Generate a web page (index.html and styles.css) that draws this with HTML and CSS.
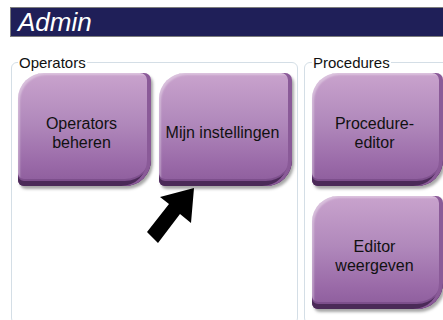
FILE: index.html
```html
<!DOCTYPE html>
<html>
<head>
  <meta charset="UTF-8">
  <title>Admin</title>
  <link rel="stylesheet" href="styles.css">
</head>
<body>
  <div class="page">
    <div class="header">Admin</div>

    <div class="panels">
      <fieldset class="group group-operators">
        <legend>Operators</legend>
        <div class="tiles">
          <button class="tile">Operators<br>beheren</button>
          <button class="tile">Mijn instellingen</button>
        </div>
      </fieldset>

      <fieldset class="group group-procedures">
        <legend>Procedures</legend>
        <div class="tiles tiles-column">
          <button class="tile">Procedure-<br>editor</button>
          <button class="tile">Editor<br>weergeven</button>
        </div>
      </fieldset>
    </div>

    <!-- pijl naar Mijn instellingen -->
    <svg class="pointer" width="60" height="64" viewBox="0 0 60 64">
      <polygon points="48,2 45,37 34,28 12,57 1,46 23,18 14,11" fill="#000"/>
    </svg>
  </div>
</body>
</html>
```

FILE: styles.css
```css
body {
  margin: 0;
  background-color: #fff;
  font-family: "Liberation Sans", Arial, sans-serif;
  overflow: hidden;
}
.page {
  position: relative;
  height: 320px;
  overflow: hidden;
}
.header {
  margin: 7px 0 0 10px;
  height: 28px;
  line-height: 28px;
  padding-left: 7px;
  background-color: #1f1f58;
  border: 1px solid #7c7c7c;
  border-right: none;
  color: #fff;
  font-size: 26px;
  font-style: italic;
}
.panels {
  display: flex;
  gap: 6px;
  margin: 17px 0 0 11px;
}
.group {
  margin: 0;
  min-width: 0;
  height: 270px;
  border: 1px solid #d4dee6;
  border-radius: 6px;
  padding: 2px 5px 0 6px;
  box-sizing: border-box;
}
.group legend {
  font-size: 15px;
  color: #111;
  padding: 0 1px;
  margin-left: 0;
}
.group-operators {
  width: 287px;
  flex: none;
}
.group-procedures {
  width: 160px;
  flex: none;
  padding-left: 7px;
}
.tiles {
  display: flex;
  gap: 8px;
}
.tiles-column {
  flex-direction: column;
  gap: 10px;
}
.tile {
  width: 134px;
  height: 113px;
  padding: 6px 6px 0 0;
  border: none;
  border-radius: 26px 7px 26px 6px;
  background: linear-gradient(to bottom, #c9a3cd 0%, #b088bb 45%, #9a6aa8 80%, #8c5c9b 100%);
  box-shadow:
    inset -4px 0 0 #8a5a98,
    inset 0 -5px 0 #4b2a58,
    inset 0 -7px 0 #7d4f8c,
    inset 2px 2px 2px rgba(255, 255, 255, 0.35),
    2px 3px 3px rgba(0, 0, 0, 0.35);
  color: #111;
  font-family: "Liberation Sans", Arial, sans-serif;
  font-size: 16px;
  line-height: 19px;
  text-align: center;
  cursor: pointer;
}
.tiles-column .tile {
  width: 131px;
}
.pointer {
  position: absolute;
  left: 146px;
  top: 186px;
}
```
